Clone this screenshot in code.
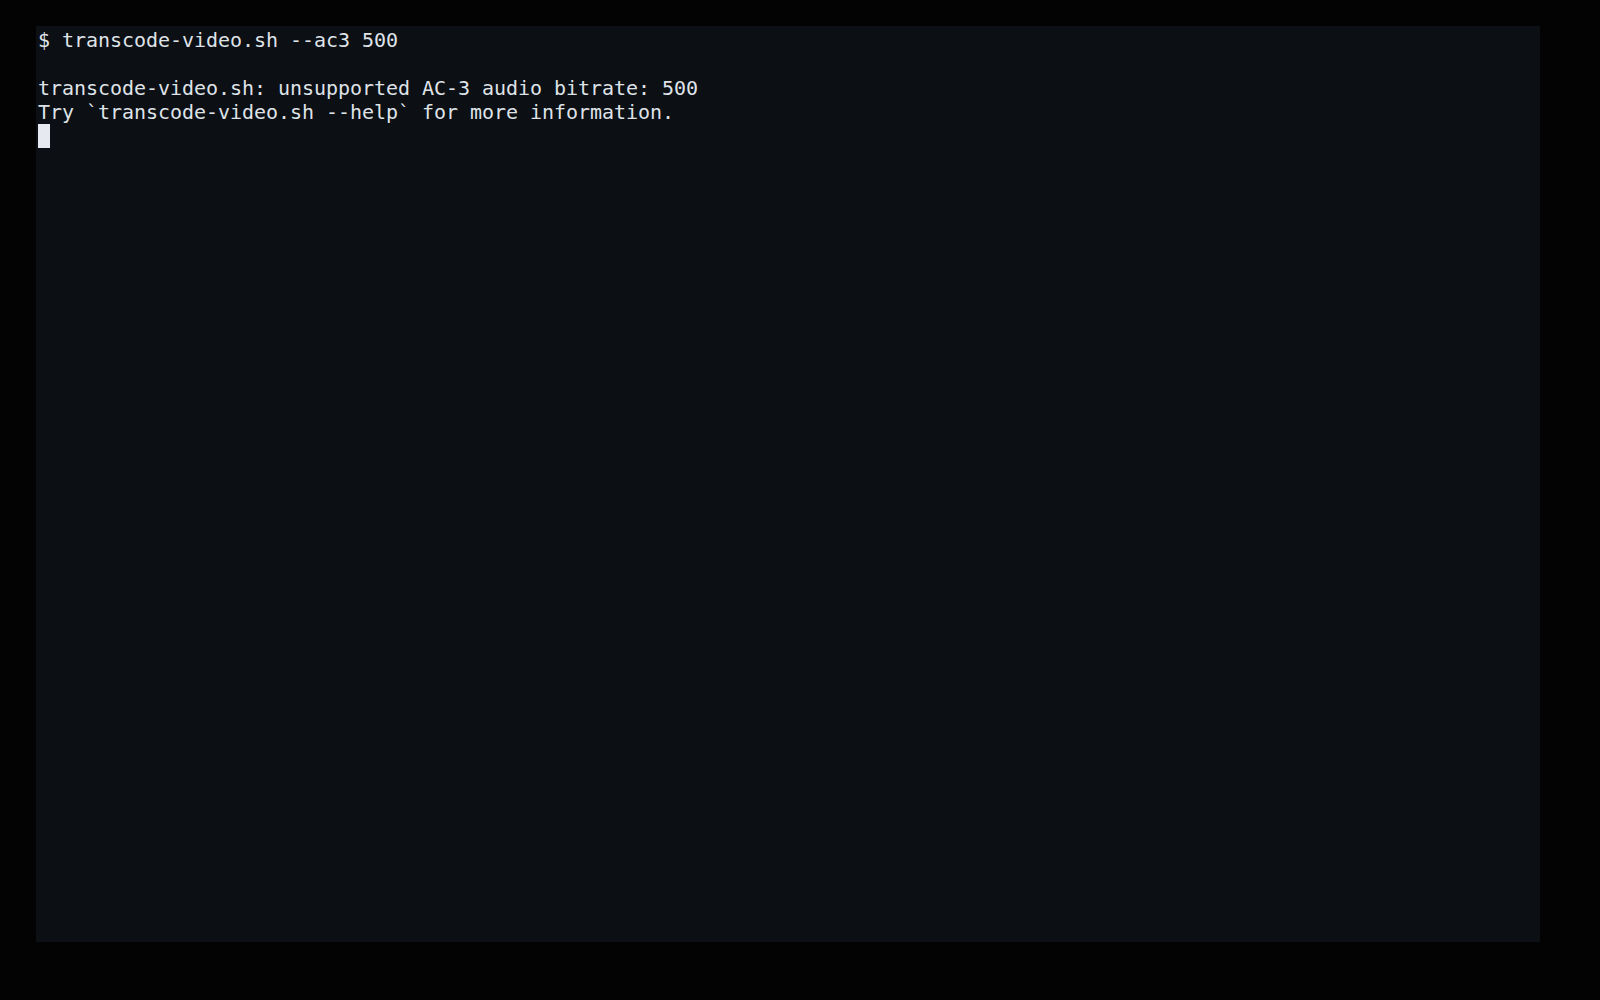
import React from "react";

export default function App() {
  const lines = [
    "$ transcode-video.sh --ac3 500",
    "",
    "transcode-video.sh: unsupported AC-3 audio bitrate: 500",
    "Try `transcode-video.sh --help` for more information.",
  ];
  return (
    <div className="w-[1600px] h-[1000px] bg-[#030303] pt-[26px] pl-[36px]">
      <div
        className="w-[1504px] h-[916px] bg-[#0c0f14] pt-[2px] pl-[2px] text-[20px] leading-[24px] tracking-[-0.04px] text-[#dfe3e8] whitespace-pre"
        style={{ fontFamily: '"DejaVu Sans Mono", monospace' }}
      >
        {lines.map((l, i) => (
          <div key={i} className="h-[24px]">
            {l}
          </div>
        ))}
        <div className="h-[24px]">
          <span className="inline-block w-[12px] h-[24px] bg-[#e6eaf0] align-top" />
        </div>
      </div>
    </div>
  );
}
